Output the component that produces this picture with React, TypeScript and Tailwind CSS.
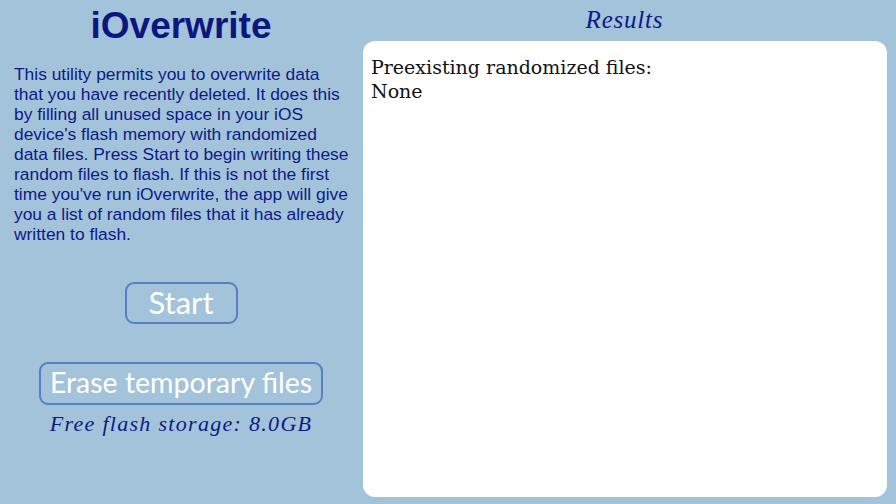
import React from "react";

const lines = [
  "This utility permits you to overwrite data",
  "that you have recently deleted. It does this",
  "by filling all unused space in your iOS",
  "device's flash memory with randomized",
  "data files. Press Start to begin writing these",
  "random files to flash. If this is not the first",
  "time you've run iOverwrite, the app will give",
  "you a list of random files that it has already",
  "written to flash.",
];

export default function App() {
  return (
    <div className="w-[896px] h-[504px] bg-[#a3c3da] flex overflow-hidden">
      <div className="w-[362px] flex flex-col items-center">
        <h1 className="mt-[5px] text-[37px] leading-[42px] font-bold text-[#0b1680] font-['Liberation_Sans',Arial,sans-serif]">
          iOverwrite
        </h1>
        <p className="mt-[17px] w-full pl-[14px] text-[17.4px] leading-[20px] text-[#0c1a86] font-['Liberation_Sans',Arial,sans-serif] whitespace-nowrap">
          {lines.map((l, i) => (
            <span key={i} className="block">
              {l}
            </span>
          ))}
        </p>
        <button className="mt-[38px] w-[113px] h-[42px] rounded-[9px] border-2 border-[#5282c1] text-white text-[31px] leading-none font-['Lato',sans-serif] flex items-center justify-center pb-[2px]">
          Start
        </button>
        <button className="mt-[38px] w-[284px] h-[43px] rounded-[9px] border-2 border-[#5282c1] text-white text-[28.5px] leading-none font-['Lato',sans-serif] flex items-center justify-center pb-[2px]">
          Erase temporary files
        </button>
        <div className="mt-[6px] italic text-[22px] leading-[26px] text-[#0c1a86] font-['Liberation_Serif',serif] tracking-[1.3px]">
          Free flash storage: 8.0GB
        </div>
      </div>
      <div className="flex-1 flex flex-col pr-[9px] pb-[7px]">
        <div className="h-[41px] text-center italic text-[25px] leading-[40px] text-[#0c1a86] font-['Liberation_Serif',serif] tracking-[0.8px]">
          Results
        </div>
        <div className="flex-1 ml-[1px] bg-white rounded-[12px] px-[8px] pt-[14px] text-[19px] leading-[24px] text-[#111111] font-['DejaVu_Serif',serif]">
          <div>Preexisting randomized files:</div>
          <div>None</div>
        </div>
      </div>
    </div>
  );
}
